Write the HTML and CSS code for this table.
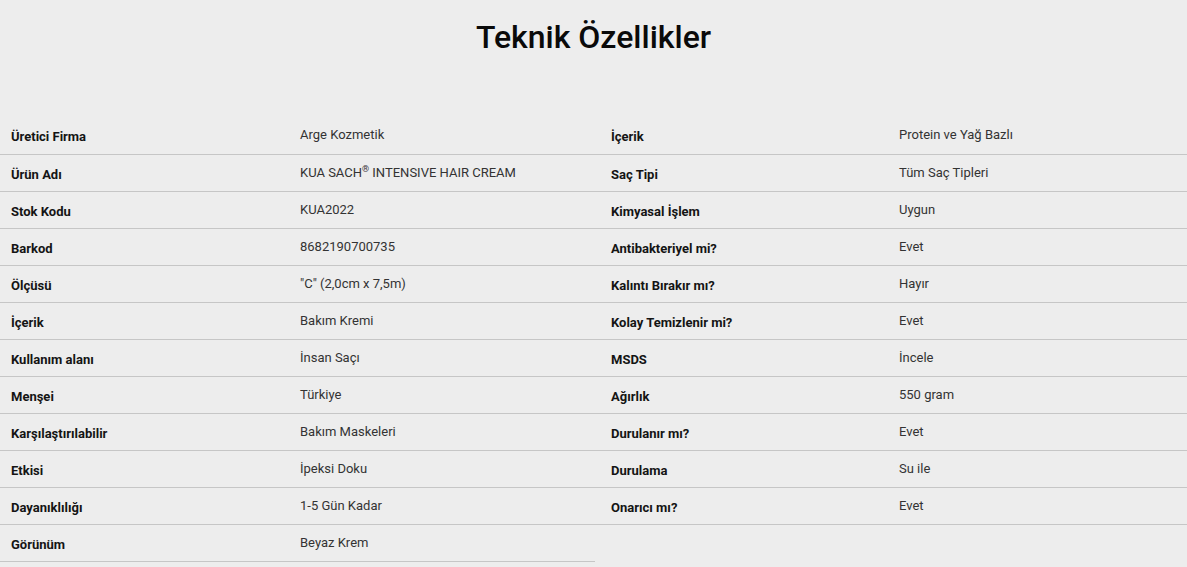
FILE: index.html
```html
<!DOCTYPE html>
<html lang="tr">
<head>
<meta charset="utf-8">
<title>Teknik Özellikler</title>
<link rel="stylesheet" href="styles.css">
</head>
<body>
<section class="specs">
  <h1 class="specs-title">Teknik Özellikler</h1>
  <div class="specs-cols">
    <table class="spec-table spec-left">
      <tbody>
        <tr><th>Üretici Firma</th><td>Arge Kozmetik</td></tr>
        <tr><th>Ürün Adı</th><td>KUA SACH<sup>®</sup> INTENSIVE HAIR CREAM</td></tr>
        <tr><th>Stok Kodu</th><td>KUA2022</td></tr>
        <tr><th>Barkod</th><td>8682190700735</td></tr>
        <tr><th>Ölçüsü</th><td>"C" (2,0cm x 7,5m)</td></tr>
        <tr><th>İçerik</th><td>Bakım Kremi</td></tr>
        <tr><th>Kullanım alanı</th><td>İnsan Saçı</td></tr>
        <tr><th>Menşei</th><td>Türkiye</td></tr>
        <tr><th>Karşılaştırılabilir</th><td>Bakım Maskeleri</td></tr>
        <tr><th>Etkisi</th><td>İpeksi Doku</td></tr>
        <tr><th>Dayanıklılığı</th><td>1-5 Gün Kadar</td></tr>
        <tr><th>Görünüm</th><td>Beyaz Krem</td></tr>
      </tbody>
    </table>
    <table class="spec-table spec-right">
      <tbody>
        <tr><th>İçerik</th><td>Protein ve Yağ Bazlı</td></tr>
        <tr><th>Saç Tipi</th><td>Tüm Saç Tipleri</td></tr>
        <tr><th>Kimyasal İşlem</th><td>Uygun</td></tr>
        <tr><th>Antibakteriyel mi?</th><td>Evet</td></tr>
        <tr><th>Kalıntı Bırakır mı?</th><td>Hayır</td></tr>
        <tr><th>Kolay Temizlenir mi?</th><td>Evet</td></tr>
        <tr><th>MSDS</th><td>İncele</td></tr>
        <tr><th>Ağırlık</th><td>550 gram</td></tr>
        <tr><th>Durulanır mı?</th><td>Evet</td></tr>
        <tr><th>Durulama</th><td>Su ile</td></tr>
        <tr><th>Onarıcı mı?</th><td>Evet</td></tr>
      </tbody>
    </table>
  </div>
</section>
</body>
</html>
```
FILE: styles.css
```css
html, body {
  margin: 0;
  padding: 0;
  background: #ededed;
}
body {
  font-family: Roboto, "Liberation Sans", Arial, sans-serif;
  color: #111;
}
.specs-title {
  margin: 0;
  padding-top: 17px;
  height: 117px;
  box-sizing: border-box;
  line-height: 40px;
  font-size: 32px;
  font-weight: 500;
  text-align: center;
  color: #0a0a0a;
}
.specs-cols {
  display: flex;
  align-items: flex-start;
}
.spec-table {
  border-collapse: collapse;
  table-layout: fixed;
}
.spec-left {
  width: 595px;
}
.spec-right {
  flex: 1;
}
.spec-table tr {
  height: 37px;
  border-bottom: 1px solid #c6c6c6;
}
.spec-table th,
.spec-table td {
  padding: 0;
  font-size: 13px;
  vertical-align: middle;
  white-space: nowrap;
}
.spec-table th {
  text-align: left;
  font-weight: 700;
  color: #141414;
  width: 289px;
  padding-left: 11px;
  padding-top: 3px;
}
.spec-right th {
  padding-left: 16px;
  width: 288px;
}
.spec-table td {
  color: #333;
  padding-bottom: 1px;
}
.spec-table sup {
  font-size: 9px;
  vertical-align: 5px;
  line-height: 0;
}
```
